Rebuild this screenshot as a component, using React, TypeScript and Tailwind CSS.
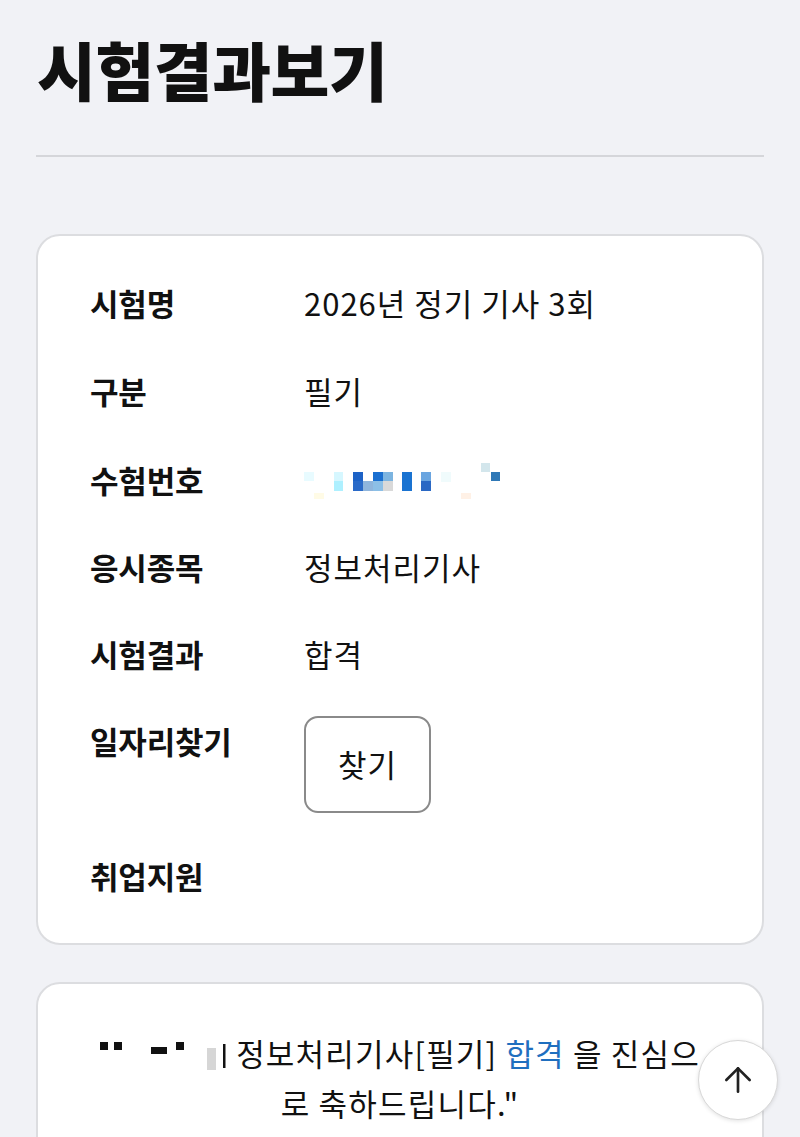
import React from "react";
import { ArrowUp } from "lucide-react";

const FONT = { fontFamily: '"Noto Sans CJK KR", "Noto Sans", sans-serif' };

function NumberMosaic() {
  const cells: [number, number, number, number, string][] = [
    [0, 12, 10, 9, "#e8fbff"],
    [30, 12, 9, 9, "#d6f7ff"],
    [30, 21, 9, 10, "#aef0ff"],
    [49, 12, 10, 9, "#1d62c6"],
    [49, 21, 10, 10, "#2a6ac8"],
    [59, 21, 10, 10, "#8fb5dc"],
    [69, 12, 10, 9, "#1a6fd0"],
    [69, 21, 10, 10, "#8cbfe6"],
    [79, 12, 10, 9, "#7cb4e0"],
    [79, 21, 10, 10, "#d9d9d9"],
    [98, 12, 10, 19, "#1a73d1"],
    [117, 12, 10, 9, "#6aa5e0"],
    [117, 21, 10, 10, "#2a68c4"],
    [137, 12, 10, 10, "#f0fbfc"],
    [177, 3, 9, 9, "#d3e6ec"],
    [187, 12, 9, 9, "#2f78b6"],
    [10, 33, 10, 6, "#fffbe6"],
    [157, 33, 10, 6, "#fff1e6"],
  ];
  return (
    <svg width="200" height="40" viewBox="0 0 200 40" className="block">
      {cells.map(([x, y, w, h, c], i) => (
        <rect key={i} x={x} y={y} width={w} height={h} fill={c} />
      ))}
    </svg>
  );
}

function NameMosaic() {
  return (
    <svg width="128" height="34" viewBox="0 0 128 34" className="inline-block align-middle mt-[-6px]">
      <rect x="0" y="4" width="8" height="8" fill="#111" />
      <rect x="14" y="4" width="8" height="8" fill="#111" />
      <rect x="51" y="9" width="16" height="7" fill="#111" />
      <rect x="76" y="4" width="8" height="8" fill="#111" />
      <rect x="107" y="10" width="9" height="22" fill="#d6d6d6" />
      <rect x="123" y="6" width="2.5" height="24" fill="#111" />
    </svg>
  );
}

function Row({ label, children, className = "" }: { label: string; children?: React.ReactNode; className?: string }) {
  return (
    <div className={`flex items-start ${className}`}>
      <div className="w-[214px] shrink-0 text-[31px] leading-[40px] font-bold tracking-[-0.2px] text-[#111]">{label}</div>
      <div className="text-[31px] leading-[40px] tracking-[1px] text-[#111]">{children}</div>
    </div>
  );
}

export default function App() {
  return (
    <div className="min-h-screen bg-[#f1f2f6] px-[36px] pb-[60px] relative overflow-hidden" style={FONT}>
      <h1 className="pt-[36px] text-[64px] leading-[64px] font-extrabold tracking-[-0.5px] text-[#111] pl-[1px]">시험결과보기</h1>
      <div className="mt-[55px] h-[2px] bg-[#d5d6da]" />

      <div className="mt-[77px] bg-white border-2 border-[#dcdde0] rounded-[24px] pt-[47px] pb-[47px] pl-[52px]">
        <Row label="시험명">2026년 정기 기사 3회</Row>
        <Row label="구분" className="mt-[48px]">필기</Row>
        <Row label="수험번호" className="mt-[49px]">
          <div className="h-[40px] flex items-center">
            <NumberMosaic />
          </div>
        </Row>
        <Row label="응시종목" className="mt-[47px]">정보처리기사</Row>
        <Row label="시험결과" className="mt-[47px]">합격</Row>
        <div className="flex items-start mt-[42px]">
          <div className="w-[214px] shrink-0 pt-[5px] text-[31px] leading-[40px] font-bold tracking-[-0.2px] text-[#111]">일자리찾기</div>
          <button className="w-[127px] h-[97px] rounded-[14px] border-2 border-[#8a8a8a] bg-white text-[31px] tracking-[1px] text-[#111]">
            찾기
          </button>
        </div>
        <Row label="취업지원" className="mt-[43px]" />
      </div>

      <div className="mt-[37px] bg-white border-2 border-[#dcdde0] rounded-[24px] pt-[44px] pb-[80px] text-center text-[31px] leading-[50px] tracking-[1.2px] text-[#111]">
        <div className="whitespace-nowrap">
          <NameMosaic /> 정보처리기사[필기] <span className="text-[#1f6fbf]">합격</span> 을 진심으
        </div>
        <div>로 축하드립니다."</div>
      </div>

      <button className="absolute left-[698px] top-[1040px] w-[80px] h-[80px] rounded-full bg-white border border-[#d8d8d8] shadow-[0_1px_4px_rgba(0,0,0,0.12)] flex items-center justify-center text-[#222]">
        <ArrowUp size={40} strokeWidth={1.6} />
      </button>
    </div>
  );
}
